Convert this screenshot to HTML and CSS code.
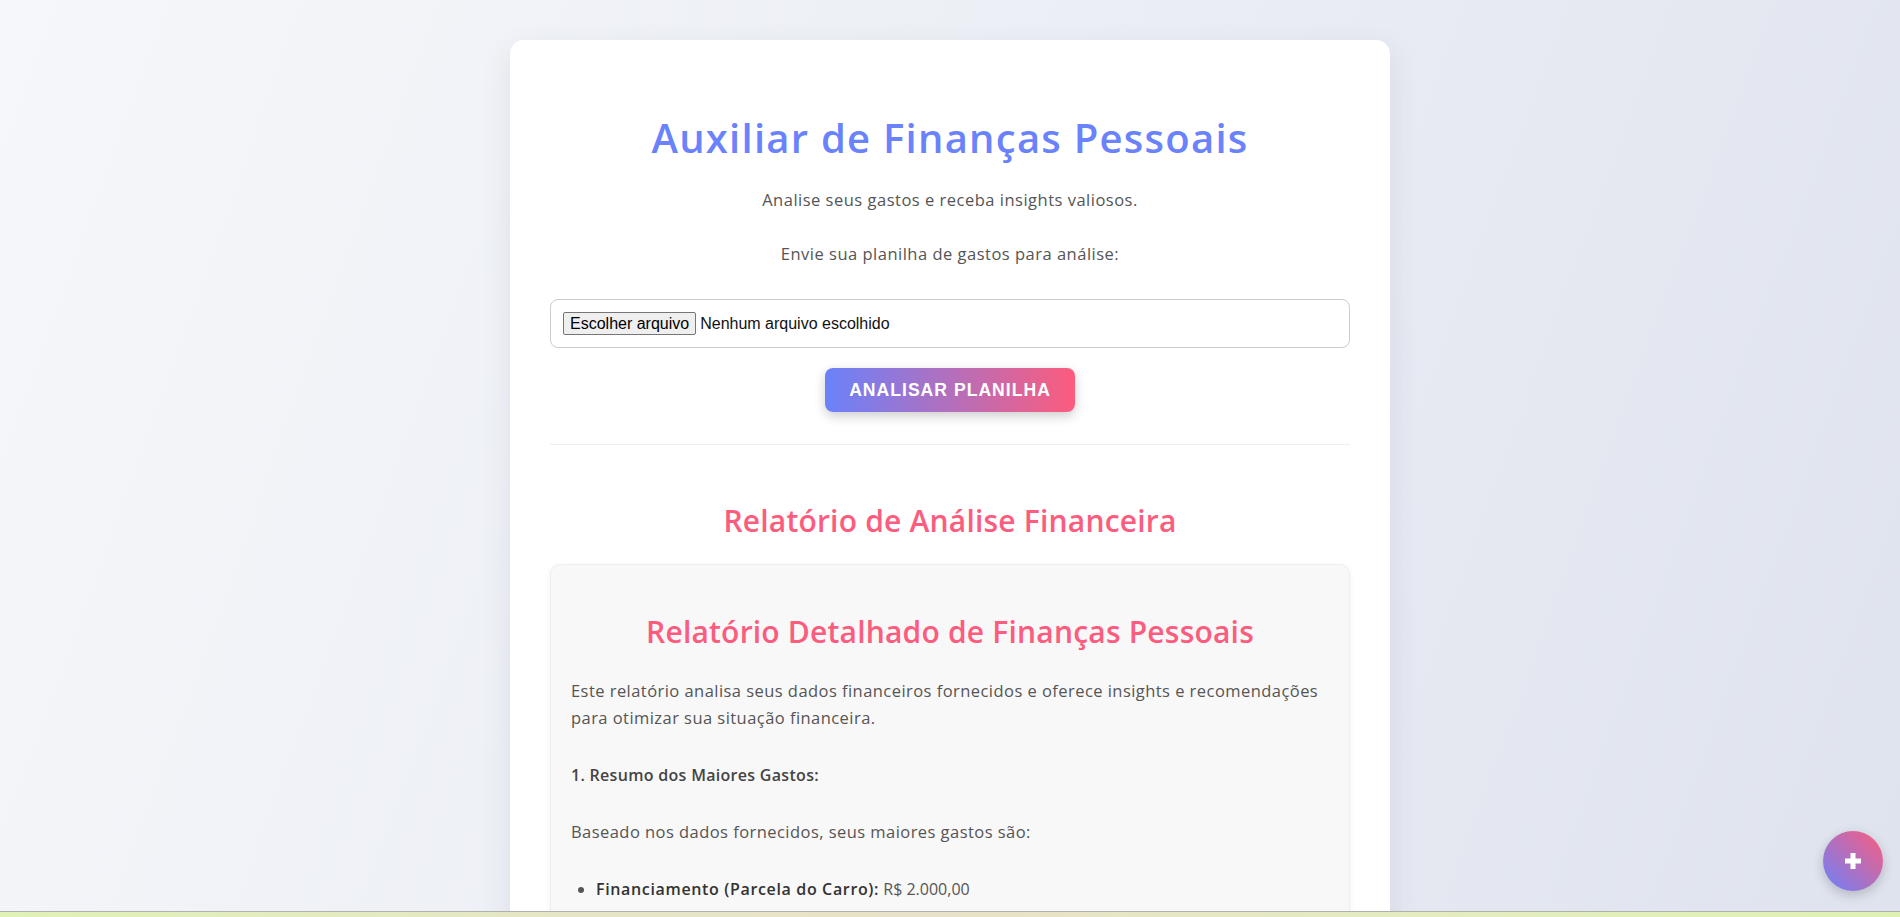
FILE: index.html
```html
<!DOCTYPE html>
<html lang="pt-BR">
<head>
<meta charset="utf-8">
<title>Auxiliar de Finanças Pessoais</title>
<link rel="stylesheet" href="styles.css">
</head>
<body>
<main class="card">
  <h1 class="title">Auxiliar de Finanças Pessoais</h1>
  <p class="subtitle">Analise seus gastos e receba insights valiosos.</p>
  <p class="label">Envie sua planilha de gastos para análise:</p>
  <div class="file-field">
    <span class="file-btn">Escolher arquivo</span>
    <span class="file-name">Nenhum arquivo escolhido</span>
  </div>
  <div class="actions">
    <button class="analyze-btn" type="button">Analisar Planilha</button>
  </div>
  <hr class="divider">
  <section class="report">
    <h2 class="report-title">Relatório de Análise Financeira</h2>
    <div class="report-box">
      <h3 class="report-heading">Relatório Detalhado de Finanças Pessoais</h3>
      <p class="report-text report-intro">Este relatório analisa seus dados financeiros fornecidos e oferece insights e recomendações para otimizar sua situação financeira.</p>
      <p class="report-section">1. Resumo dos Maiores Gastos:</p>
      <p class="report-text">Baseado nos dados fornecidos, seus maiores gastos são:</p>
      <ul class="report-list">
        <li><strong>Financiamento (Parcela do Carro):</strong> R$ 2.000,00</li>
      </ul>
    </div>
  </section>
</main>
<button class="fab" type="button" aria-label="Adicionar">
  <svg width="18" height="18" viewBox="0 0 18 18"><path d="M9 1v16M1 9h16" stroke="#fff" stroke-width="5"/></svg>
</button>
<div class="bottom-strip"></div>
</body>
</html>
```
FILE: styles.css
```css
html {
  background: linear-gradient(110deg, #f5f7fa 0%, #eceff5 45%, #dfe3ee 100%) fixed;
  min-height: 100%;
}
body {
  margin: 0;
  font-family: "Open Sans", "Noto Sans", sans-serif;
  color: #555;
}
.card {
  max-width: 800px;
  margin: 40px auto;
  padding: 40px 40px 200px;
  background: #fff;
  border-radius: 14px;
  box-shadow: 0 10px 30px rgba(60, 70, 100, 0.10);
  text-align: center;
}
.title {
  margin: 34px 0 0;
  font-size: 40px;
  line-height: 48px;
  font-weight: 600;
  letter-spacing: 1.25px;
  color: #6a82fb;
}
.subtitle {
  margin: 24px 0 0;
  font-size: 16.5px;
  line-height: 27px;
  letter-spacing: 0.5px;
}
.label {
  margin: 27px 0 0;
  font-size: 16.5px;
  line-height: 27px;
  letter-spacing: 0.5px;
}
.file-field {
  margin-top: 32px;
  display: flex;
  align-items: center;
  padding: 12px;
  border: 1px solid #ccc;
  border-radius: 8px;
  font-family: "Liberation Sans", Arial, sans-serif;
  font-size: 16px;
  color: #111;
  text-align: left;
}
.file-btn {
  padding: 2px 6px 1px;
  background: #efefef;
  border: 1px solid #767676;
  border-radius: 2px;
  line-height: 18px;
  color: #000;
  margin-right: 4px;
}
.actions {
  margin-top: 20px;
  display: flex;
  justify-content: center;
}
.analyze-btn {
  padding: 12px 24px;
  border: none;
  border-radius: 8px;
  background: linear-gradient(90deg, #6a82fb 0%, #fc5c7d 100%);
  color: #fff;
  font-family: "Liberation Sans", Arial, sans-serif;
  font-weight: 700;
  font-size: 17.6px;
  line-height: 20px;
  letter-spacing: 1px;
  text-transform: uppercase;
  box-shadow: 0 4px 12px rgba(0, 0, 0, 0.2);
  cursor: pointer;
}
.divider {
  margin: 32px 0 0;
  border: none;
  height: 1px;
  background: #eee;
}
.report-title {
  margin: 58px 0 0;
  font-size: 30px;
  line-height: 36px;
  font-weight: 600;
  letter-spacing: 0.2px;
  color: #fc5c7d;
}
.report-box {
  margin-top: 25px;
  padding: 20px 20px 40px;
  background: #f8f8f8;
  border: 1px solid #eee;
  border-radius: 10px;
  box-shadow: 0 2px 6px rgba(0, 0, 0, 0.06);
  text-align: left;
}
.report-heading {
  margin: 29px 0 0;
  font-size: 30px;
  line-height: 36px;
  font-weight: 600;
  letter-spacing: 0.2px;
  color: #fc5c7d;
  text-align: center;
}
.report-text {
  margin: 29px 0 0;
  font-size: 16.5px;
  line-height: 27px;
  letter-spacing: 0.45px;
}
.report-intro {
  margin-top: 27px;
}
.report-section {
  margin: 31px 0 0;
  font-size: 16px;
  line-height: 27px;
  font-weight: 600;
  letter-spacing: 0.3px;
  color: #444;
}
.report-list {
  margin: 31px 0 0;
  padding-left: 25px;
  font-size: 16px;
  line-height: 27px;
  color: #555;
}
.report-list li {
  margin-bottom: 12px;
}
.report-list strong {
  font-weight: 600;
  letter-spacing: 0.65px;
  color: #333;
}
.fab {
  position: fixed;
  right: 17px;
  bottom: 26px;
  width: 60px;
  height: 60px;
  border: none;
  border-radius: 50%;
  background: linear-gradient(45deg, #6a82fb 0%, #fc5c7d 100%);
  box-shadow: 0 4px 12px rgba(0, 0, 0, 0.2);
  display: flex;
  align-items: center;
  justify-content: center;
  padding: 0;
}
.bottom-strip {
  position: fixed;
  left: 0;
  right: 0;
  bottom: 0;
  height: 5px;
  border-top: 1px solid #b0b0b0;
  background: linear-gradient(90deg, #e0f2b6 0%, #e6e6c6 30%, #e8e2c8 50%, #e4ecc0 75%, #dff2b4 100%);
}
```
